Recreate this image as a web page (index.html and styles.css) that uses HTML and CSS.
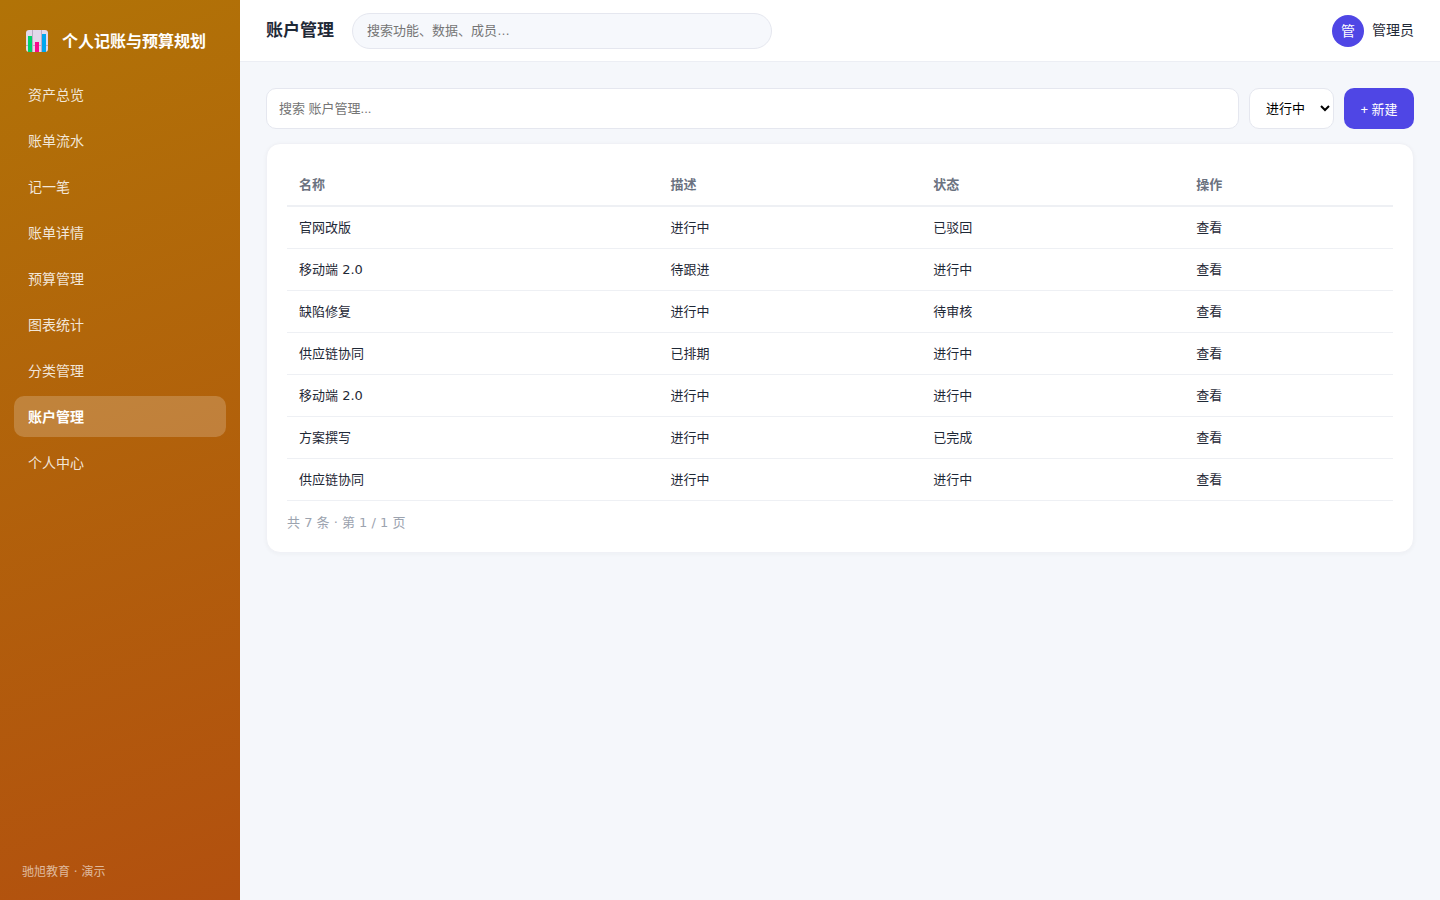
FILE: index.html
```html
<!DOCTYPE html>
<html lang="zh-CN">
<head>
<meta charset="UTF-8">
<meta name="viewport" content="width=device-width, initial-scale=1.0">
<title>账户管理</title>
<link rel="stylesheet" href="styles.css">
</head>
<body>
<div class="app">
  <aside class="sidebar">
    <div class="brand">
      <svg class="logo" viewBox="0 0 22 22" aria-hidden="true">
        <rect width="22" height="22" rx="3" fill="#e2d9ea"/>
        <path d="M6.5 0v22M15.5 0v22M0 15.5h22" stroke="#b9acc4" fill="none"/>
        <rect x="2" y="6" width="4" height="16" fill="#00d26a"/>
        <rect x="9" y="12" width="4" height="10" fill="#f70a8d"/>
        <rect x="16" y="4" width="4" height="18" fill="#00a6ed"/>
      </svg>
      <span>个人记账与预算规划</span>
    </div>
    <nav class="menu">
      <a href="#">资产总览</a>
      <a href="#">账单流水</a>
      <a href="#">记一笔</a>
      <a href="#">账单详情</a>
      <a href="#">预算管理</a>
      <a href="#">图表统计</a>
      <a href="#">分类管理</a>
      <a href="#" class="active">账户管理</a>
      <a href="#">个人中心</a>
    </nav>
    <div class="side-foot">驰旭教育 · 演示</div>
  </aside>

  <div class="main">
    <header class="topbar">
      <h1>账户管理</h1>
      <input class="search" type="text" placeholder="搜索功能、数据、成员…" aria-label="搜索功能、数据、成员">
      <div class="user">
        <span class="avatar">管</span>
        <span>管理员</span>
      </div>
    </header>

    <main class="content">
      <div class="toolbar">
        <input type="text" placeholder="搜索 账户管理..." aria-label="搜索 账户管理">
        <select aria-label="状态">
          <option>进行中</option>
        </select>
        <button type="button">+ 新建</button>
      </div>

      <section class="card">
        <table>
          <thead>
            <tr><th>名称</th><th>描述</th><th>状态</th><th>操作</th></tr>
          </thead>
          <tbody>
            <tr><td>官网改版</td><td>进行中</td><td>已驳回</td><td>查看</td></tr>
            <tr><td>移动端 2.0</td><td>待跟进</td><td>进行中</td><td>查看</td></tr>
            <tr><td>缺陷修复</td><td>进行中</td><td>待审核</td><td>查看</td></tr>
            <tr><td>供应链协同</td><td>已排期</td><td>进行中</td><td>查看</td></tr>
            <tr><td>移动端 2.0</td><td>进行中</td><td>进行中</td><td>查看</td></tr>
            <tr><td>方案撰写</td><td>进行中</td><td>已完成</td><td>查看</td></tr>
            <tr><td>供应链协同</td><td>进行中</td><td>进行中</td><td>查看</td></tr>
          </tbody>
        </table>
        <div class="pager">共 7 条 · 第 1 / 1 页</div>
      </section>
    </main>
  </div>
</div>
</body>
</html>
```
FILE: styles.css
```css
* {
  box-sizing: border-box;
}
body {
  margin: 0;
  font-family: "DejaVu Sans", "Noto Sans CJK SC", sans-serif;
  font-size: 14px;
  line-height: 21px;
  color: #1f2937;
  background: #f5f7fb;
}
.app {
  display: flex;
  min-height: 100vh;
}

/* 侧边栏 */
.sidebar {
  display: flex;
  flex-direction: column;
  flex: 0 0 240px;
  padding: 22px 14px 18px;
  color: #fff;
  background: linear-gradient(160deg, #b17307, #b2500f);
}
.brand {
  display: flex;
  align-items: center;
  gap: 14px;
  height: 38px;
  padding: 0 12px;
  margin-bottom: 14px;
  font-size: 16px;
  font-weight: 700;
  white-space: nowrap;
}
.logo {
  width: 22px;
  height: 22px;
}
.menu {
  display: flex;
  flex-direction: column;
  gap: 5px;
}
.menu a {
  padding: 11px 14px 9px;
  border-radius: 10px;
  color: rgba(255, 255, 255, 0.85);
  text-decoration: none;
}
.menu a.active {
  color: #fff;
  font-weight: 600;
  background: rgba(255, 255, 255, 0.2);
}
.side-foot {
  margin-top: auto;
  padding: 0 8px;
  font-size: 12px;
  line-height: 20px;
  color: rgba(255, 255, 255, 0.6);
}

/* 顶栏 */
.main {
  flex: 1;
  min-width: 0;
}
.topbar {
  display: flex;
  align-items: center;
  gap: 18px;
  height: 62px;
  padding: 0 26px;
  background: #fff;
  border-bottom: 1px solid #eceef4;
}
.topbar h1 {
  margin: 0;
  font-size: 17px;
  font-weight: 700;
  line-height: 23px;
}
input,
select,
button {
  font-family: "Liberation Sans", "Noto Sans CJK SC", sans-serif;
  font-size: 13px;
}
.search {
  width: 420px;
  height: 36px;
  padding: 0 14px;
  border: 1px solid #e5e7ef;
  border-radius: 18px;
  background: #f6f8fc;
}
.user {
  display: flex;
  align-items: center;
  gap: 8px;
  margin-left: auto;
}
.avatar {
  width: 32px;
  height: 32px;
  border-radius: 50%;
  background: #4f46e5;
  color: #fff;
  font-size: 14px;
  line-height: 32px;
  text-align: center;
}

/* 内容区 */
.content {
  padding: 26px;
}
.toolbar {
  display: flex;
  gap: 10px;
  height: 41px;
  margin-bottom: 14px;
}
.toolbar input {
  flex: 1;
  min-width: 0;
  padding: 0 12px;
  border: 1px solid #e5e7ef;
  border-radius: 10px;
  background: #fff;
}
.toolbar select {
  padding: 0 12px;
  width: 85px;
  border: 1px solid #e5e7ef;
  border-radius: 10px;
  color: #000;
  background: #fff;
}
.toolbar button {
  min-width: 70px;
  padding: 0 16px;
  border: none;
  border-radius: 10px;
  color: #fff;
  background: #4f46e5;
  cursor: pointer;
}
.card {
  padding: 20px;
  border: 1px solid #f0f1f6;
  border-radius: 14px;
  background: #fff;
  box-shadow: 0 1px 4px rgba(31, 41, 55, 0.04);
}
table {
  width: 100%;
  border-collapse: separate;
  border-spacing: 0;
  font-size: 13px;
}
th,
td {
  padding: 10px 12px;
  text-align: left;
  border-bottom: 1px solid #eef0f4;
}
th {
  font-weight: 600;
  color: #6b7280;
  border-bottom-width: 2px;
}
.pager {
  margin-top: 12px;
  font-size: 13px;
  line-height: 19px;
  color: #9ca3af;
}
```
